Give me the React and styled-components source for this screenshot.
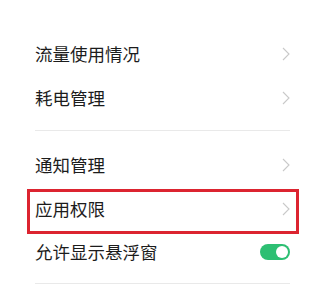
import React from "react";
import styled, { createGlobalStyle } from "styled-components";

const Global = createGlobalStyle`
  html, body { margin: 0; padding: 0; background: #ffffff; }
  body { font-family: "Noto Sans CJK SC", "Noto Sans", sans-serif; }
`;

const Page = styled.div`
  width: 321px;
  height: 284px;
  overflow: hidden;
  background: #ffffff;
  padding: 32px 31px 0 35px;
  box-sizing: border-box;
  display: flex;
  flex-direction: column;
`;

const Section = styled.div`
  display: flex;
  flex-direction: column;
  padding-bottom: ${(p) => p.$pb || 0}px;
  border-bottom: 1px solid #e9e9e9;
  margin-bottom: ${(p) => p.$mb || 0}px;
`;

const Row = styled.div`
  position: relative;
  display: flex;
  align-items: center;
  justify-content: space-between;
  height: ${(p) => p.$h || 44}px;
  &::after {
    content: "";
    display: ${(p) => (p.$marked ? "block" : "none")};
    position: absolute;
    left: -8px;
    right: -9px;
    top: 2px;
    bottom: -3px;
    border: 3px solid #dc2430;
    pointer-events: none;
  }
`;

const Label = styled.span`
  font-size: 17.5px;
  color: #1c1c1c;
  letter-spacing: 0;
  line-height: 1;
`;

const Chevron = styled.svg`
  width: 8px;
  height: 14px;
  margin-right: 0;
`;

const Toggle = styled.div`
  width: 30px;
  height: 16px;
  border-radius: 8px;
  background: #2dbf73;
  display: flex;
  align-items: center;
  justify-content: flex-end;
  padding: 0 2px;
  box-sizing: border-box;
`;

const Knob = styled.div`
  width: 12px;
  height: 12px;
  border-radius: 50%;
  background: #ffffff;
`;

const Arrow = () => (
  <Chevron viewBox="0 0 8 14">
    <path d="M1 1 L7 7 L1 13" fill="none" stroke="#c9c9c9" strokeWidth="1.1" />
  </Chevron>
);

export default function App() {
  return (
    <>
      <Global />
      <Page>
        <Section $pb={10} $mb={12}>
          <Row>
            <Label>流量使用情况</Label>
            <Arrow />
          </Row>
          <Row>
            <Label>耗电管理</Label>
            <Arrow />
          </Row>
        </Section>
        <Section $pb={10}>
          <Row>
            <Label>通知管理</Label>
            <Arrow />
          </Row>
          <Row $marked>
            <Label>应用权限</Label>
            <Arrow />
          </Row>
          <Row $h={42}>
            <Label>允许显示悬浮窗</Label>
            <Toggle>
              <Knob />
            </Toggle>
          </Row>
        </Section>
      </Page>
    </>
  );
}
